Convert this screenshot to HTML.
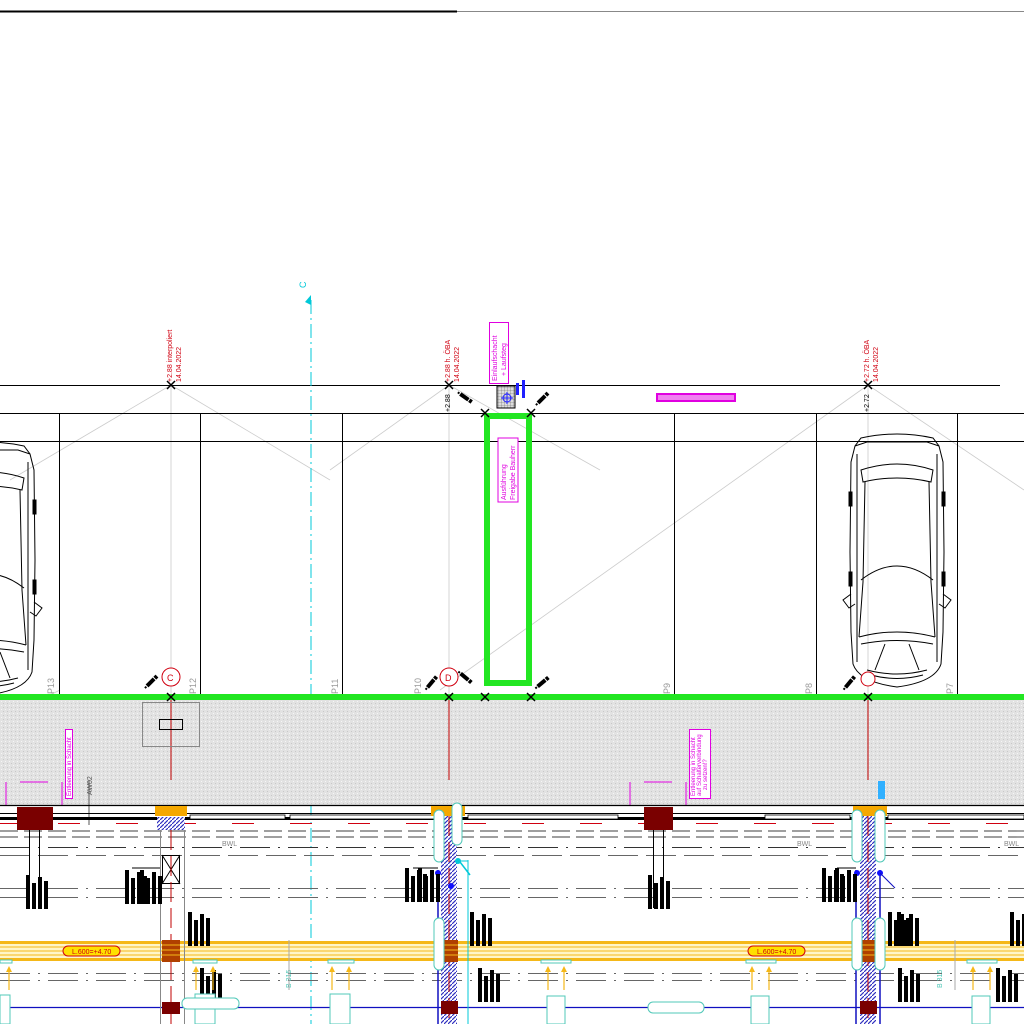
<!DOCTYPE html>
<html><head><meta charset="utf-8"><style>
html,body{margin:0;padding:0;background:#fff;}
svg{display:block;}
text{font-family:"Liberation Sans",sans-serif;}
</style></head><body>
<svg width="1024" height="1024" viewBox="0 0 1024 1024" xmlns="http://www.w3.org/2000/svg">
<defs>
<pattern id="hatch" width="4" height="4" patternUnits="userSpaceOnUse">
<rect width="4" height="4" fill="#fff"/>
<path d="M0,4 L4,0" stroke="#3030c0" stroke-width="1.2"/>
</pattern>
<pattern id="speck" width="4" height="4" patternUnits="userSpaceOnUse">
<rect width="4" height="4" fill="#e2e2e2"/>
<rect x="1" y="1" width="1" height="1" fill="#f6f6f6"/>
<rect x="3" y="3" width="1" height="1" fill="#c8c8c8"/>
</pattern>
<pattern id="grid" width="3" height="3" patternUnits="userSpaceOnUse">
<rect width="3" height="3" fill="#ddd"/>
<path d="M0,0H3M0,0V3" stroke="#666" stroke-width="0.6"/>
</pattern>
<g id="car" fill="none" stroke="#000" stroke-width="1">
<path d="M-36,6 Q0,-2 36,6 L42,14 L46,30 L47,120 L46,200 L44,232 Q38,250 0,255 Q-38,250 -44,232 L-46,200 L-47,120 L-46,30 L-42,14 Z"/>
<path d="M-42,14 L-30,10 L30,10 L42,14"/>
<path d="M-40,22 L-40,230 M40,22 L40,230"/>
<path d="M-36,38 Q0,26 36,38 L34,50 Q0,42 -34,50 Z"/>
<path d="M-32,50 L-34,150 M32,50 L34,150"/>
<path d="M-36,148 Q0,120 36,148"/>
<path d="M-34,150 L-38,205 M34,150 L38,205"/>
<path d="M-38,205 Q0,195 38,205"/>
<path d="M-36,212 Q0,205 36,212"/>
<path d="M-30,238 Q0,246 30,238 M-26,243 Q0,250 26,243"/>
<path d="M-46,162 L-54,168 L-48,176 L-42,172 M46,162 L54,168 L48,176 L42,172"/>
<path d="M-12,212 L-22,238 M12,212 L22,238"/>
<rect x="-48" y="60" width="3" height="14" fill="#000"/><rect x="45" y="60" width="3" height="14" fill="#000"/>
<rect x="-48" y="140" width="3" height="14" fill="#000"/><rect x="45" y="140" width="3" height="14" fill="#000"/>
</g>
<g id="txt"><rect x="0" y="0" width="4" height="34" fill="#000"/><rect x="6" y="8" width="4" height="26" fill="#000"/><rect x="12" y="2" width="4" height="32" fill="#000"/><rect x="18" y="6" width="4" height="28" fill="#000"/></g>
<g id="mk"><rect x="-7" y="-2" width="10" height="4" fill="#000"/><rect x="4" y="-2" width="3" height="4" fill="#000"/><rect x="-10" y="-1" width="2" height="2" fill="#000"/></g>
</defs>

<rect width="1024" height="1024" fill="#fff"/>

<line x1="0" y1="11.5" x2="457" y2="11.5" stroke="#000" stroke-width="2"/>
<line x1="457" y1="11.5" x2="1024" y2="11.5" stroke="#888" stroke-width="1"/>

<g stroke="#ccc" stroke-width="0.8">
<line x1="171" y1="385" x2="10" y2="480"/>
<line x1="171" y1="385" x2="330" y2="480"/>
<line x1="449" y1="385" x2="330" y2="470"/>
<line x1="449" y1="385" x2="600" y2="470"/>
<line x1="868" y1="385" x2="1024" y2="490"/>
<line x1="868" y1="385" x2="440" y2="690"/>
<line x1="60" y1="690" x2="0" y2="720"/>
<line x1="171" y1="385" x2="171" y2="697"/>
<line x1="449" y1="385" x2="449" y2="697"/>
<line x1="868" y1="385" x2="868" y2="697"/>
</g>

<line x1="0" y1="385.5" x2="1000" y2="385.5" stroke="#000" stroke-width="1"/>
<line x1="0" y1="413.5" x2="1024" y2="413.5" stroke="#000" stroke-width="1"/>
<line x1="0" y1="441.5" x2="1024" y2="441.5" stroke="#000" stroke-width="1"/>

<g stroke="#000" stroke-width="1">
<line x1="59.5" y1="413" x2="59.5" y2="697"/>
<line x1="200.5" y1="413" x2="200.5" y2="697"/>
<line x1="342.5" y1="413" x2="342.5" y2="697"/>
<line x1="674.5" y1="413" x2="674.5" y2="697"/>
<line x1="816.5" y1="413" x2="816.5" y2="697"/>
<line x1="957.5" y1="413" x2="957.5" y2="697"/>
</g>
<g fill="#999" font-size="9">
<text transform="translate(54,694) rotate(-90)">P13</text>
<text transform="translate(196,694) rotate(-90)">P12</text>
<text transform="translate(338,694) rotate(-90)">P11</text>
<text transform="translate(421,694) rotate(-90)">P10</text>
<text transform="translate(670,694) rotate(-90)">P9</text>
<text transform="translate(812,694) rotate(-90)">P8</text>
<text transform="translate(953,694) rotate(-90)">P7</text>
</g>

<line x1="311" y1="300" x2="311" y2="1024" stroke="#00c8d8" stroke-width="1" stroke-dasharray="14,4,2,4"/>
<polygon points="305,302 311,295 311,305" fill="#00c8d8"/>
<text transform="translate(306,288) rotate(-90)" font-size="9" fill="#00c8d8">C</text>

<use href="#car" transform="translate(-12,440)"/>
<use href="#car" transform="translate(897,432)"/>

<rect x="487" y="416" width="42" height="267" fill="none" stroke="#22e622" stroke-width="6"/>
<rect x="498" y="438" width="20" height="64" fill="#fff" stroke="#e000e0" stroke-width="1"/>
<text transform="translate(506,500) rotate(-90)" font-size="7" fill="#e000e0">Ausführung</text>
<text transform="translate(515,500) rotate(-90)" font-size="7" fill="#e000e0">Freigabe Bauherr</text>

<rect x="489.5" y="322.5" width="19" height="61" fill="#fff" stroke="#e000e0"/>
<text transform="translate(497,381) rotate(-90)" font-size="7" fill="#e000e0">Einlaufschacht</text>
<text transform="translate(506,376) rotate(-90)" font-size="7" fill="#e000e0">+ Laufsteg</text>
<rect x="497" y="386" width="18" height="22" fill="url(#grid)" stroke="#000"/>
<circle cx="507" cy="398" r="4" fill="none" stroke="#2020ff"/>
<line x1="501" y1="398" x2="513" y2="398" stroke="#2020ff"/><line x1="507" y1="392" x2="507" y2="404" stroke="#2020ff"/>
<rect x="516" y="383" width="3" height="12" fill="#2020ff"/><rect x="522" y="380" width="3" height="18" fill="#2020ff"/>
<rect x="656" y="393" width="80" height="9" fill="#e000e0"/>
<rect x="658" y="395" width="76" height="5" fill="#fff" opacity="0.5"/>

<g fill="#d00010" font-size="7">
<text transform="translate(172,382) rotate(-90)">+2.88 interpoliert</text>
<text transform="translate(181,382) rotate(-90)">14.04.2022</text>
<text transform="translate(450,382) rotate(-90)">+2.88 h. ÖBA</text>
<text transform="translate(459,382) rotate(-90)">14.04.2022</text>
<text transform="translate(869,382) rotate(-90)">+2.72 h. ÖBA</text>
<text transform="translate(878,382) rotate(-90)">14.04.2022</text>
</g>
<g fill="#000" font-size="7">
<text transform="translate(450,412) rotate(-90)">+2.88</text>
<text transform="translate(869,412) rotate(-90)">+2.72</text>
</g>
<use href="#mk" transform="translate(466,398) rotate(35)"/>
<use href="#mk" transform="translate(543,398) rotate(-45)"/>
<use href="#mk" transform="translate(152,681) rotate(-45)"/>
<use href="#mk" transform="translate(432,682) rotate(-50)"/>
<use href="#mk" transform="translate(466,678) rotate(40)"/>
<use href="#mk" transform="translate(543,682) rotate(-40)"/>
<use href="#mk" transform="translate(850,682) rotate(-50)"/>
<use href="#mk" transform="translate(156,792) rotate(45)"/>
<use href="#mk" transform="translate(434,792) rotate(45)"/>
<use href="#mk" transform="translate(852,792) rotate(45)"/>

<g fill="#fff" stroke="#d00010" stroke-width="1">
<circle cx="171" cy="677" r="9"/><circle cx="449" cy="677" r="9"/><circle cx="868" cy="679" r="7"/>
</g>
<text x="167" y="681" font-size="9" fill="#d00010">C</text>
<text x="445" y="681" font-size="9" fill="#d00010">D</text>

<rect x="0" y="700" width="1024" height="105" fill="url(#speck)"/>
<rect x="0" y="694" width="1024" height="6" fill="#22e622"/>
<g stroke="#000" stroke-width="1.5">
<path d="M167,381l8,8m0,-8l-8,8M445,381l8,8m0,-8l-8,8M864,381l8,8m0,-8l-8,8M481,409l8,8m0,-8l-8,8M527,409l8,8m0,-8l-8,8M167,693l8,8m0,-8l-8,8M445,693l8,8m0,-8l-8,8M481,693l8,8m0,-8l-8,8M527,693l8,8m0,-8l-8,8M864,693l8,8m0,-8l-8,8"/>
</g>

<g stroke="#c00000" stroke-width="1">
<line x1="171" y1="700" x2="171" y2="780"/><line x1="449" y1="700" x2="449" y2="780"/><line x1="868" y1="700" x2="868" y2="780"/>
</g>
<rect x="142.5" y="702.5" width="57" height="44" fill="none" stroke="#888"/>
<rect x="159.5" y="719.5" width="23" height="10" fill="none" stroke="#000"/>

<rect x="65.5" y="729.5" width="7" height="69" fill="#fff" stroke="#e000e0"/>
<text transform="translate(71,796) rotate(-90)" font-size="6" fill="#e000e0">Entleerung in Schacht</text>
<rect x="689.5" y="729.5" width="21" height="69" fill="#fff" stroke="#e000e0"/>
<g font-size="6" fill="#e000e0">
<text transform="translate(695,796) rotate(-90)">Entleerung in Schacht</text>
<text transform="translate(701,796) rotate(-90)">auf Schalterverbindung</text>
<text transform="translate(707,790) rotate(-90)">zu setzen!?</text>
</g>
<g stroke="#e000e0" stroke-width="1">
<path d="M6,782V805M20,782H48M62,782V805M630,782V805M644,782H672M686,782V805"/>
</g>
<line x1="89" y1="780" x2="89" y2="825" stroke="#555"/>
<text transform="translate(92,795) rotate(-90)" font-size="7" fill="#555">AW02</text>

<rect x="878" y="781" width="7" height="18" fill="#30b0ff"/>

<line x1="0" y1="805.5" x2="1024" y2="805.5" stroke="#000" stroke-width="1.2"/>
<line x1="0" y1="813.5" x2="1024" y2="813.5" stroke="#000" stroke-width="1"/>
<rect x="0" y="817" width="1024" height="3" fill="#000"/>
<g fill="#fff" stroke="#000" stroke-width="0.8">
<rect x="190" y="815" width="95" height="4"/><rect x="290" y="815" width="150" height="4"/><rect x="468" y="815" width="150" height="4"/><rect x="765" y="815" width="85" height="4"/><rect x="888" y="815" width="136" height="4"/>
</g>
<line x1="0" y1="823.5" x2="1024" y2="823.5" stroke="#d00010" stroke-width="1" stroke-dasharray="22,36"/>
<g stroke="#666" stroke-width="1.2" stroke-dasharray="18,6">
<line x1="0" y1="831" x2="1024" y2="831"/><line x1="0" y1="837" x2="1024" y2="837"/>
</g>
<line x1="0" y1="847.5" x2="1024" y2="847.5" stroke="#333" stroke-width="1" stroke-dasharray="30,8,2,8"/>
<line x1="0" y1="855.5" x2="1024" y2="855.5" stroke="#666" stroke-width="1" stroke-dasharray="30,8"/>
<text x="222" y="846" font-size="7" fill="#888">BWL</text>
<text x="797" y="846" font-size="7" fill="#888">BWL</text>
<text x="1004" y="846" font-size="7" fill="#888">BWL</text>
<g stroke="#666" stroke-width="1" stroke-dasharray="30,8,2,8">
<line x1="0" y1="888.5" x2="1024" y2="888.5"/><line x1="0" y1="897.5" x2="1024" y2="897.5"/>
<line x1="0" y1="973.5" x2="1024" y2="973.5"/><line x1="0" y1="980.5" x2="1024" y2="980.5"/>
</g>

<rect x="0" y="941" width="1024" height="20" fill="#fff6c8"/>
<rect x="0" y="941" width="1024" height="3" fill="#f5b818"/>
<rect x="0" y="958" width="1024" height="3" fill="#f5b818"/>
<g stroke="#f5b818" stroke-width="1"><line x1="0" y1="947" x2="1024" y2="947"/><line x1="0" y1="951" x2="1024" y2="951"/><line x1="0" y1="955" x2="1024" y2="955"/></g>
<rect x="63" y="946" width="57" height="10" rx="5" fill="#ffe000" stroke="#d00010"/>
<text x="72" y="954" font-size="7" fill="#d00010">L.600=+4.70</text>
<rect x="748" y="946" width="57" height="10" rx="5" fill="#ffe000" stroke="#d00010"/>
<text x="757" y="954" font-size="7" fill="#d00010">L.600=+4.70</text>

<line x1="0" y1="1007.5" x2="1024" y2="1007.5" stroke="#1010c0" stroke-width="1.2"/>

<g>
<rect x="155" y="806" width="32" height="10" fill="#f5a800"/>
<rect x="157" y="817" width="28" height="13" fill="url(#hatch)"/>
<line x1="160.5" y1="830" x2="160.5" y2="1024" stroke="#888"/>
<line x1="184.5" y1="830" x2="184.5" y2="1024" stroke="#888"/>
<rect x="162.5" y="855.5" width="17" height="28" fill="#fff" stroke="#000"/>
<path d="M162,855L180,884M180,855L162,884" stroke="#000"/>
<line x1="171" y1="830" x2="171" y2="1024" stroke="#c00000" stroke-dasharray="20,6"/>
<rect x="162" y="940" width="18" height="22" fill="#b04000"/>
<g stroke="#f5b818"><line x1="162" y1="945" x2="180" y2="945"/><line x1="162" y1="950" x2="180" y2="950"/><line x1="162" y1="955" x2="180" y2="955"/></g>
<rect x="162" y="1002" width="18" height="12" fill="#7a0000"/>
</g>

<rect x="431" y="806" width="34" height="10" fill="#f5a800"/>
<rect x="441" y="816" width="16" height="208" fill="url(#hatch)"/>
<line x1="438" y1="870" x2="438" y2="1024" stroke="#1010c0" stroke-width="1.5"/>
<line x1="449" y1="816" x2="449" y2="1024" stroke="#c00000" stroke-dasharray="20,6"/>
<rect x="441" y="940" width="17" height="22" fill="#b04000"/>
<g stroke="#f5b818"><line x1="441" y1="945" x2="458" y2="945"/><line x1="441" y1="950" x2="458" y2="950"/><line x1="441" y1="955" x2="458" y2="955"/></g>
<rect x="441" y="1001" width="17" height="13" fill="#7a0000"/>
<rect x="434" y="810" width="10" height="52" rx="5" fill="#fff" stroke="#50c8b8"/>
<rect x="452" y="803" width="10" height="42" rx="5" fill="#fff" stroke="#50c8b8"/>
<rect x="434" y="918" width="10" height="52" rx="5" fill="#fff" stroke="#50c8b8"/>
<line x1="468" y1="860" x2="468" y2="1024" stroke="#00c8d8"/>
<line x1="458" y1="861" x2="468" y2="861" stroke="#00c8d8"/>
<line x1="460" y1="862" x2="470" y2="875" stroke="#00c8d8" stroke-width="1.5"/>
<circle cx="458" cy="861" r="3" fill="#00c8d8"/>
<circle cx="438" cy="873" r="3" fill="#1010ff"/><circle cx="451" cy="886" r="3" fill="#1010ff"/>

<rect x="853" y="806" width="34" height="10" fill="#f5a800"/>
<rect x="860" y="816" width="16" height="208" fill="url(#hatch)"/>
<line x1="856" y1="870" x2="856" y2="1024" stroke="#1010c0" stroke-width="1.5"/>
<line x1="880" y1="870" x2="880" y2="1024" stroke="#1010c0" stroke-width="1.5"/>
<line x1="868" y1="816" x2="868" y2="1024" stroke="#c00000" stroke-dasharray="20,6"/>
<rect x="860" y="940" width="17" height="22" fill="#b04000"/>
<g stroke="#f5b818"><line x1="860" y1="945" x2="877" y2="945"/><line x1="860" y1="950" x2="877" y2="950"/><line x1="860" y1="955" x2="877" y2="955"/></g>
<rect x="860" y="1001" width="17" height="13" fill="#7a0000"/>
<rect x="852" y="810" width="10" height="52" rx="5" fill="#fff" stroke="#50c8b8"/>
<rect x="875" y="810" width="10" height="52" rx="5" fill="#fff" stroke="#50c8b8"/>
<rect x="852" y="918" width="10" height="52" rx="5" fill="#fff" stroke="#50c8b8"/>
<rect x="875" y="918" width="10" height="52" rx="5" fill="#fff" stroke="#50c8b8"/>
<circle cx="857" cy="873" r="3" fill="#1010ff"/><circle cx="880" cy="873" r="3" fill="#1010ff"/>
<line x1="880" y1="873" x2="895" y2="888" stroke="#1010c0"/>

<rect x="17" y="807" width="36" height="23" fill="#7a0000"/>
<rect x="644" y="807" width="29" height="23" fill="#7a0000"/>

<g stroke="#000" stroke-width="1">
<line x1="29.5" y1="830" x2="29.5" y2="908"/><line x1="39.5" y1="830" x2="39.5" y2="908"/>
<line x1="653.5" y1="830" x2="653.5" y2="908"/><line x1="663.5" y1="830" x2="663.5" y2="908"/>
<line x1="132" y1="868" x2="160" y2="868"/><line x1="413" y1="868" x2="438" y2="868"/><line x1="837" y1="868" x2="856" y2="868"/>
</g>

<use href="#txt" transform="translate(26,875)"/>
<use href="#txt" transform="translate(125,870)"/>
<use href="#txt" transform="translate(140,870)"/>
<use href="#txt" transform="translate(405,868)"/>
<use href="#txt" transform="translate(418,868)"/>
<use href="#txt" transform="translate(188,912)"/>
<use href="#txt" transform="translate(470,912)"/>
<use href="#txt" transform="translate(648,875)"/>
<use href="#txt" transform="translate(822,868)"/>
<use href="#txt" transform="translate(835,868)"/>
<use href="#txt" transform="translate(888,912)"/>
<use href="#txt" transform="translate(897,912)"/>
<use href="#txt" transform="translate(200,968)"/>
<use href="#txt" transform="translate(478,968)"/>
<use href="#txt" transform="translate(898,968)"/>
<use href="#txt" transform="translate(996,968)"/>
<use href="#txt" transform="translate(1010,912)"/>

<g stroke="#50c8b8" fill="#fff">
<rect x="0" y="960" width="12" height="3"/><rect x="193" y="960" width="24" height="3"/><rect x="328" y="960" width="26" height="3"/><rect x="541" y="960" width="30" height="3"/><rect x="746" y="960" width="30" height="3"/><rect x="967" y="960" width="30" height="3"/>
<rect x="0" y="995" width="10" height="29"/><rect x="195" y="994" width="20" height="30"/><rect x="330" y="994" width="20" height="30"/><rect x="547" y="996" width="18" height="28"/><rect x="751" y="996" width="18" height="28"/><rect x="972" y="996" width="18" height="28"/>
<rect x="182" y="998" width="57" height="11" rx="5"/><rect x="648" y="1002" width="56" height="11" rx="5"/>
</g>
<text transform="translate(291,988) rotate(-90)" font-size="7" fill="#50c8b8">B 315</text>
<text transform="translate(942,988) rotate(-90)" font-size="7" fill="#50c8b8">B 315</text>
<line x1="289" y1="940" x2="289" y2="990" stroke="#aaa"/>
<line x1="955" y1="940" x2="955" y2="990" stroke="#aaa"/>
<g stroke="#f5b818" stroke-width="1.2" fill="#f5b818">
<path d="M9,990V968M196,990V968M213,990V968M332,990V968M349,990V968M548,990V968M564,990V968M752,990V968M769,990V968M973,990V968M990,990V968"/>
</g>
<g fill="#f5b818">
<path d="M6,972l3,-6l3,6zM193,972l3,-6l3,6zM210,972l3,-6l3,6zM329,972l3,-6l3,6zM346,972l3,-6l3,6zM545,972l3,-6l3,6zM561,972l3,-6l3,6zM749,972l3,-6l3,6zM766,972l3,-6l3,6zM970,972l3,-6l3,6zM987,972l3,-6l3,6z"/>
</g>
</svg>
</body></html>
